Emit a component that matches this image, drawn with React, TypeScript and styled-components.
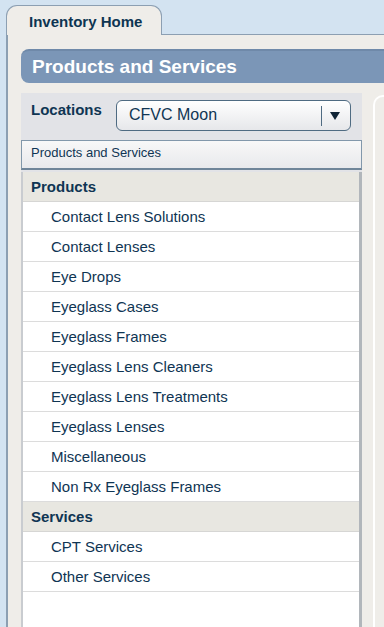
import styled, { createGlobalStyle } from 'styled-components'

const GlobalStyle = createGlobalStyle`
  html, body {
    margin: 0;
    padding: 0;
    background: #d3e3f1;
    font-family: "Liberation Sans", Arial, sans-serif;
    color: #0f3553;
    overflow: hidden;
  }
`

const groups = [
  {
    title: 'Products',
    items: [
      'Contact Lens Solutions',
      'Contact Lenses',
      'Eye Drops',
      'Eyeglass Cases',
      'Eyeglass Frames',
      'Eyeglass Lens Cleaners',
      'Eyeglass Lens Treatments',
      'Eyeglass Lenses',
      'Miscellaneous',
      'Non Rx Eyeglass Frames',
    ],
  },
  {
    title: 'Services',
    items: ['CPT Services', 'Other Services'],
  },
]

export default function App() {
  return (
    <Page>
      <GlobalStyle />
      <Tabs>
        <Tab>Inventory Home</Tab>
      </Tabs>
      <Panel>
        <TitleBar>Products and Services</TitleBar>
        <Columns>
          <Sidebar>
            <LocationRow>
              <Label>Locations</Label>
              <Select>
                <SelectText>CFVC Moon</SelectText>
                <SelectDivider />
                <Arrow />
              </Select>
            </LocationRow>
            <ListHeader>Products and Services</ListHeader>
            <List>
              {groups.map((g) => (
                <li key={g.title}>
                  <GroupTitle>{g.title}</GroupTitle>
                  <ul>
                    {g.items.map((item) => (
                      <Item key={item}>{item}</Item>
                    ))}
                  </ul>
                </li>
              ))}
            </List>
          </Sidebar>
          <Detail />
        </Columns>
      </Panel>
    </Page>
  )
}

const Page = styled.div`
  padding: 5px 0 0 6px;
  height: 622px;
  width: 378px;
  overflow: hidden;
  display: flex;
  flex-direction: column;
`

const Tabs = styled.div`
  display: flex;
  position: relative;
  z-index: 1;
  margin-bottom: -1px;
`

const Tab = styled.div`
  width: 156px;
  height: 30px;
  box-sizing: border-box;
  padding: 7px 0 0 22px;
  background: #efede9;
  border: 1px solid #8c9fb2;
  border-bottom: none;
  border-radius: 11px 11px 0 0;
  font-size: 15px;
  font-weight: bold;
  color: #0d3552;
`

const Panel = styled.div`
  flex: 1;
  background: #efede9;
  border-top: 1px solid #8c9fb2;
  border-left: 2px solid #8c9fb2;
  padding: 14px 0 0 13px;
  display: flex;
  flex-direction: column;
  min-width: 0;
  overflow: hidden;
`

const TitleBar = styled.div`
  height: 34px;
  box-sizing: border-box;
  margin-right: -20px;
  padding: 5px 0 0 11px;
  background: #7b96b7;
  border-top: 2px solid #6f89a9;
  border-radius: 8px 0 0 8px;
  font-size: 19px;
  font-weight: bold;
  color: #ffffff;
`

const Columns = styled.div`
  flex: 1;
  display: flex;
  gap: 11px;
  margin-top: 10px;
  min-height: 0;
`

const Sidebar = styled.div`
  width: 341px;
  flex: none;
  background: #e2e3e7;
  display: flex;
  flex-direction: column;
`

const LocationRow = styled.div`
  display: flex;
  align-items: flex-start;
  height: 47px;
  padding: 7px 0 0 10px;
  box-sizing: border-box;
`

const Label = styled.div`
  width: 85px;
  padding-top: 1px;
  font-size: 15px;
  font-weight: bold;
`

const Select = styled.div`
  width: 235px;
  height: 31px;
  box-sizing: border-box;
  display: flex;
  align-items: center;
  border: 1px solid #4f6b82;
  border-radius: 6px;
  background: linear-gradient(#ffffff, #e6e7ea);
`

const SelectText = styled.span`
  flex: 1;
  padding: 0 0 2px 12px;
  font-size: 16px;
`

const SelectDivider = styled.span`
  width: 1px;
  height: 20px;
  background: #4f6b82;
`

const Arrow = styled.span`
  width: 0;
  height: 0;
  margin: 0 10px 0 8px;
  border-left: 5px solid transparent;
  border-right: 5px solid transparent;
  border-top: 8px solid #0f2436;
`

const ListHeader = styled.div`
  height: 30px;
  box-sizing: border-box;
  padding: 4px 0 0 9px;
  background: linear-gradient(#f8f8f8, #e8e9ec);
  border: 1px solid #8298ab;
  border-bottom: 2px solid #6f8599;
  font-size: 13px;
`

const List = styled.ul`
  flex: 1;
  margin: 2px 0 0;
  padding: 0;
  list-style: none;
  background: #ffffff;
  border-left: 2px solid #c9ccd0;
  border-right: 3px solid #b1b6bb;

  ul {
    margin: 0;
    padding: 0;
    list-style: none;
  }
`

const GroupTitle = styled.div`
  height: 30px;
  box-sizing: border-box;
  padding: 6px 0 0 8px;
  background: #e8e7e1;
  border-bottom: 1px solid #d6d6d4;
  font-size: 15px;
  font-weight: bold;
`

const Item = styled.li`
  height: 30px;
  box-sizing: border-box;
  padding: 6px 0 0 28px;
  border-bottom: 1px solid #dcdcdc;
  font-size: 15px;
`

const Detail = styled.div`
  flex: 1;
  margin-top: 2px;
  border: 2px solid #ffffff;
  border-right: none;
  border-bottom: none;
  border-radius: 10px 0 0 0;
`
